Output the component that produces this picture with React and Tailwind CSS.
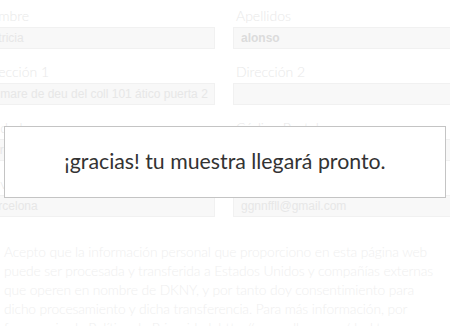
import React from "react";

function Field({ label, value, bold }) {
  return (
    <div className="flex flex-col">
      <div className="h-[20px] leading-[20px] pl-[3px] text-[14px] font-light text-[#e9e9e9] whitespace-nowrap">
        {label}
      </div>
      <div className="mt-[1px] h-[22px] border border-[#f1f1f1] bg-[#f8f8f8] pl-[7px] flex items-center overflow-hidden">
        <span
          className={
            "whitespace-nowrap text-[12px] " +
            (bold ? "font-bold text-[#dcdcdc]" : "text-[#e7e7e7]")
          }
          style={{ fontFamily: '"Liberation Sans", Arial, sans-serif' }}
        >
          {value}
        </span>
      </div>
    </div>
  );
}

export default function App() {
  return (
    <div
      className="relative w-[450px] h-[326px] overflow-hidden bg-white"
      style={{ fontFamily: 'Lato, "Noto Sans", sans-serif' }}
    >
      <div className="ml-[-23px] pt-[6px] grid grid-cols-[238px_238px] gap-x-[18px] gap-y-[13px]">
        <Field label="Nombre" value="patricia" />
        <Field label="Apellidos" value="alonso" bold />
        <Field label="Dirección 1" value="C/ mare de deu del coll 101 ático puerta 2" />
        <Field label="Dirección 2" value="" />
        <Field label="Ciudad" value="Barcelona" />
        <Field label="Código Postal" value="08023" />
        <Field label="Provincia" value="barcelona" />
        <Field label="Email" value="ggnnffll@gmail.com" />
      </div>
      <p className="mt-[25px] pl-[4px] text-[13.8px] tracking-[-0.1px] leading-[19px] font-light text-[#efefef] whitespace-nowrap">
        Acepto que la información personal que proporciono en esta página web
        <br />
        puede ser procesada y transferida a Estados Unidos y compañías externas
        <br />
        que operen en nombre de DKNY, y por tanto doy consentimiento para
        <br />
        dicho procesamiento y dicha transferencia. Para más información, por
        <br />
        favor revise la Política de Privacidad: http://myny.dkny.com/desktop
      </p>
      <div className="absolute left-[4px] top-[126px] w-[442px] h-[72px] border border-[#c4c4c4] bg-white flex items-center justify-center">
        <span className="text-[21.3px] text-[#333333] pb-[1px]">
          ¡gracias! tu muestra llegará pronto.
        </span>
      </div>
    </div>
  );
}
